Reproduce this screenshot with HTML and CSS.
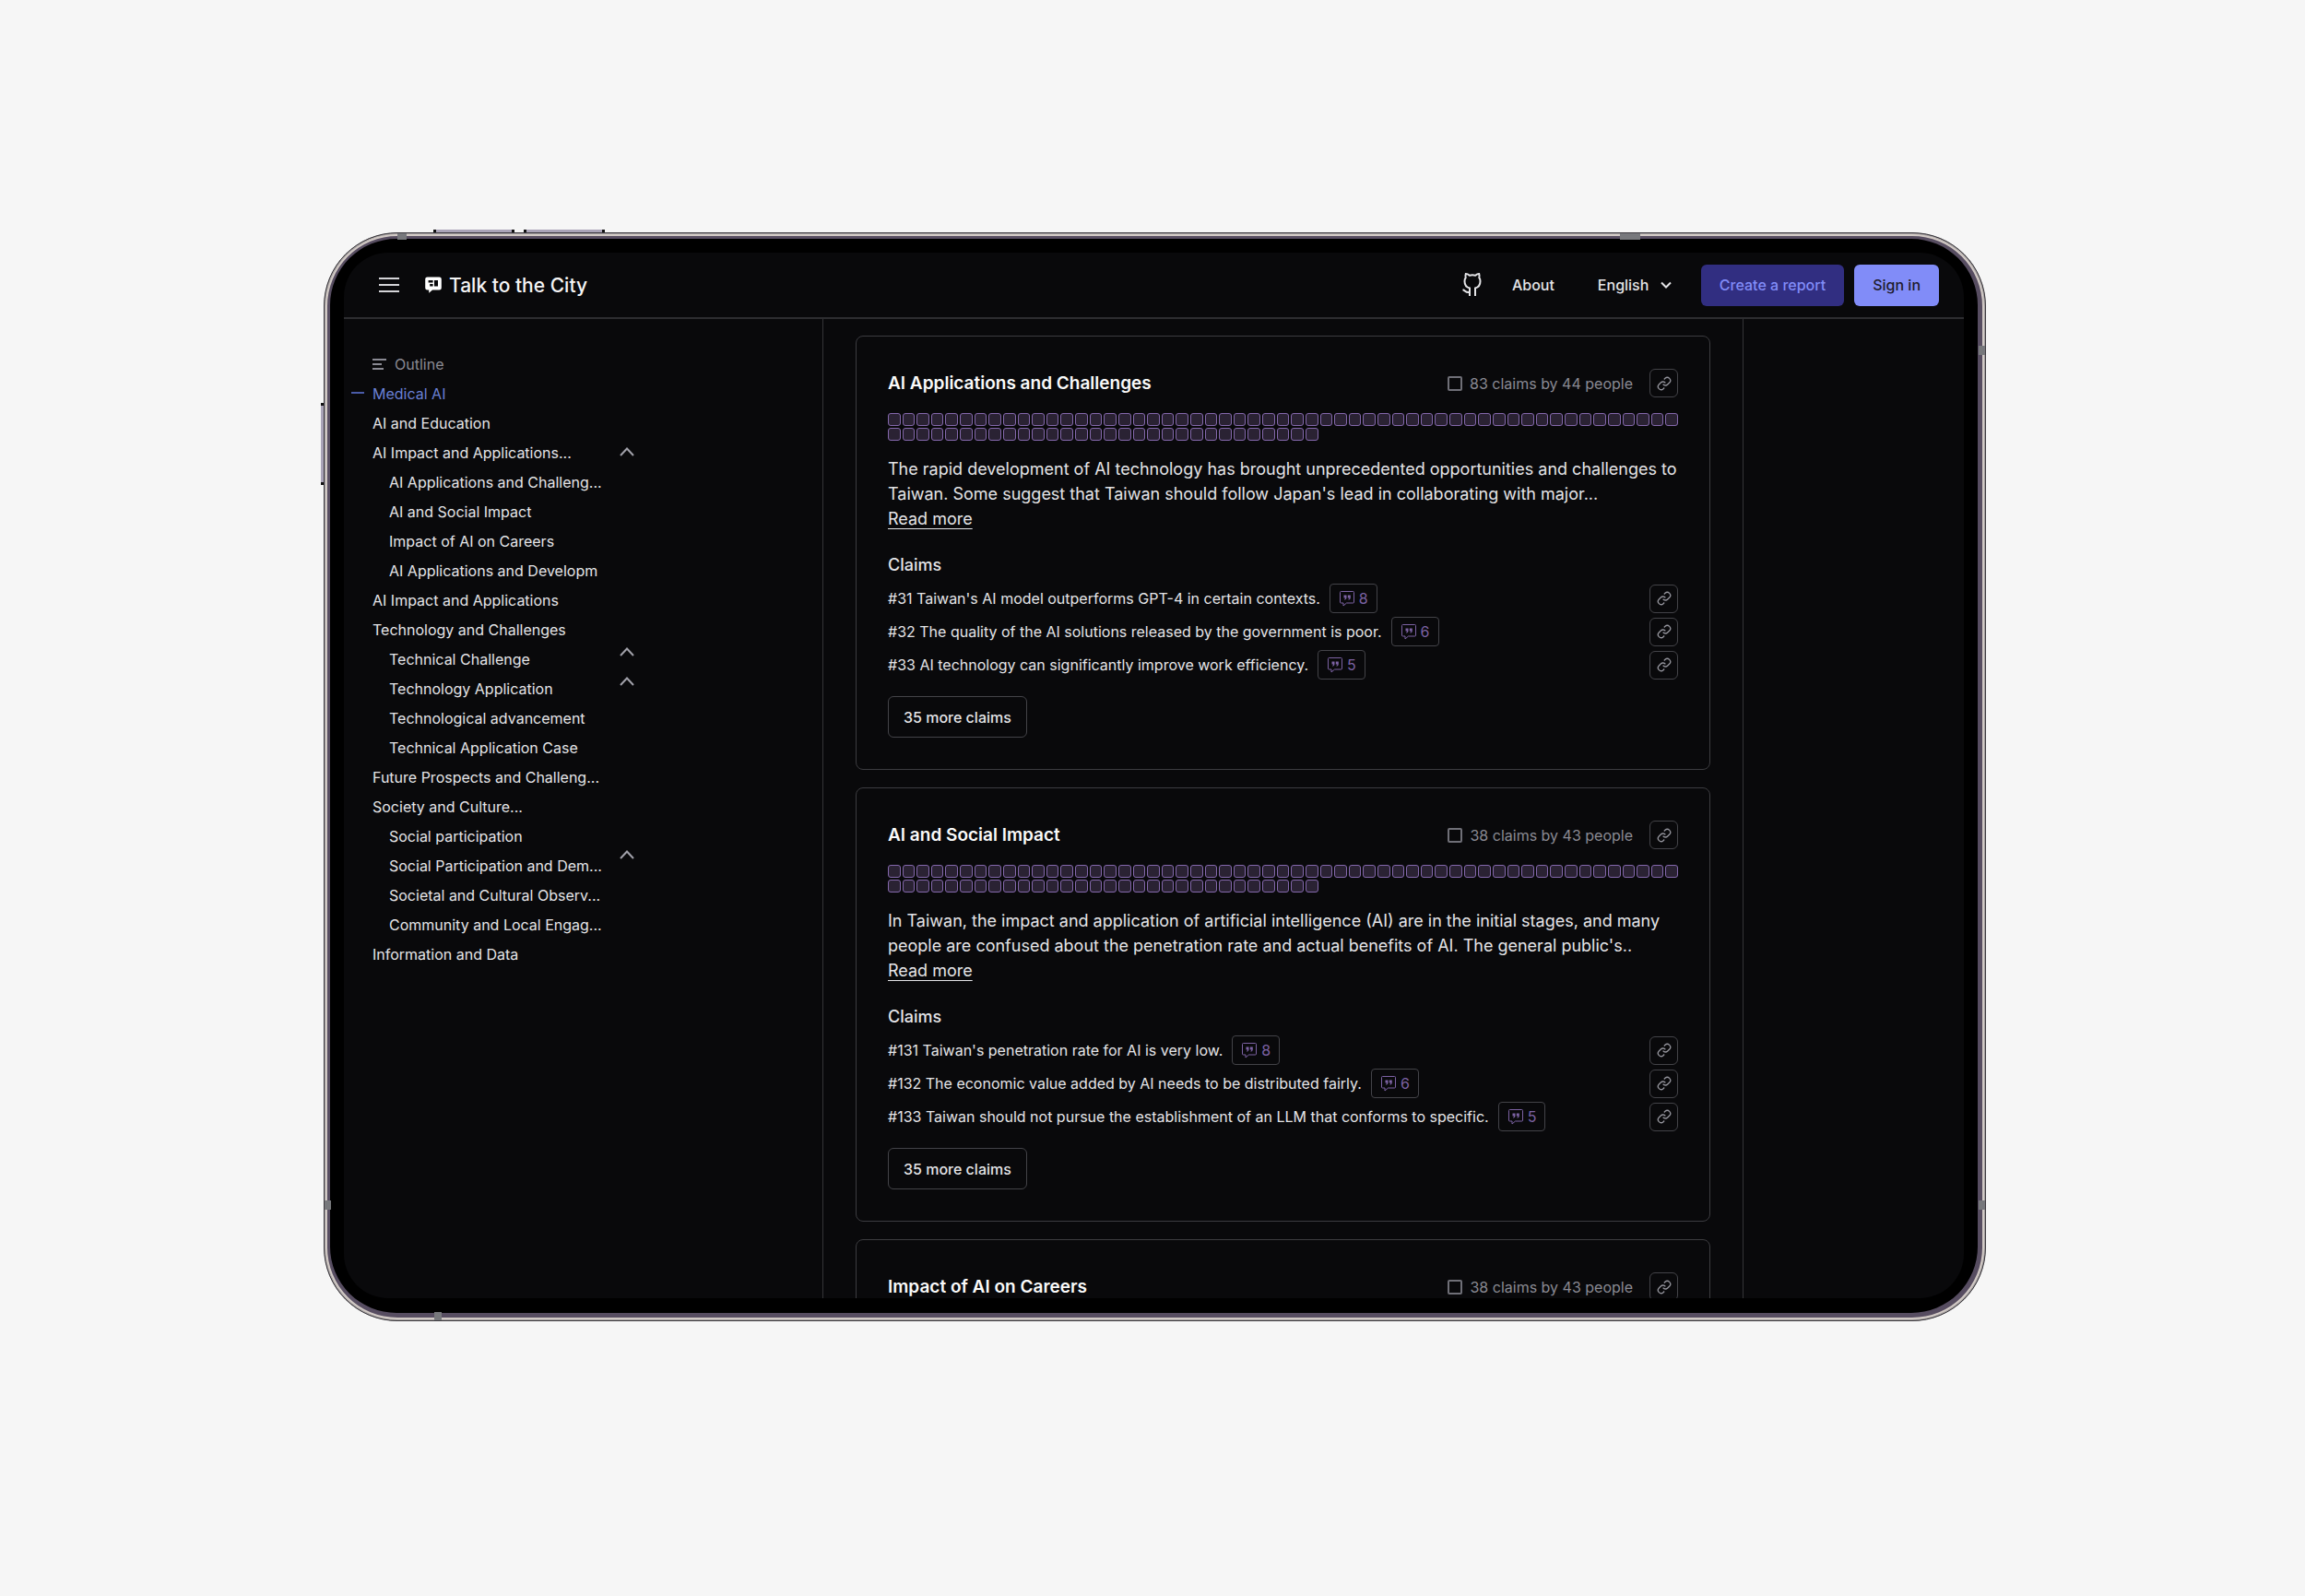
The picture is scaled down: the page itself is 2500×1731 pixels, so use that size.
FILE: index.html
```html
<!DOCTYPE html>
<html lang="en">
<head>
  <meta charset="UTF-8">
  <meta name="viewport" content="width=device-width, initial-scale=1.0">
  <title>Talk to the City</title>
  <link rel="stylesheet" href="styles.css">
</head>
<body>
  <!-- shared icons -->
  <svg class="sprite" aria-hidden="true">
    <symbol id="icon-link" viewBox="0 0 24 24">
      <path d="M10 13a5 5 0 0 0 7.54.54l3-3a5 5 0 0 0-7.07-7.07l-1.72 1.71"/>
      <path d="M14 11a5 5 0 0 0-7.54-.54l-3 3a5 5 0 0 0 7.07 7.07l1.71-1.71"/>
    </symbol>
    <symbol id="icon-quote" viewBox="0 0 18 18">
      <path d="M2.500 1.500h13a1 1 0 0 1 1 1v10.500a1 1 0 0 1-1 1H8.500L5 17V14H2.500a1 1 0 0 1-1-1V2.500a1 1 0 0 1 1-1z"/>
      <path fill="currentColor" stroke="none" d="M5.500 5.500h3v2.500c0 1.300-.7 2.200-2 2.700l-.4-.7c.7-.4 1-.9 1-1.500H5.500zM9.800 5.500h3v2.500c0 1.300-.7 2.200-2 2.700l-.4-.7c.7-.4 1-.9 1-1.500H9.800z"/>
    </symbol>
    <symbol id="icon-up" viewBox="0 0 16 10">
      <path d="M1 9l7-7.500L15 9"/>
    </symbol>
  </svg>

  <div class="device">
    <span class="key key-top key-power"></span>
    <span class="key key-top key-volume"></span>
    <span class="key key-side"></span>
    <span class="band band-top-left"></span>
    <span class="band band-top-right"></span>
    <span class="band band-bottom"></span>
    <span class="band band-left"></span>
    <span class="band band-right-top"></span>
    <span class="band band-right-bottom"></span>

    <div class="screen">
      <header class="navbar">
        <button class="menu-button" aria-label="Menu">
          <svg width="22" height="18" viewBox="0 0 22 18"><path d="M0 2h22M0 9h22M0 16h22"/></svg>
        </button>
        <a class="brand" href="#">
          <svg width="18" height="18" viewBox="0 0 18 18">
            <path fill="#fff" fill-rule="evenodd" d="M2.500 0.500h13a2.300 2.300 0 0 1 2.300 2.300v9.400a2.300 2.300 0 0 1-2.300 2.300H8L4.200 17.800V14.500H2.500a2.300 2.300 0 0 1-2.300-2.300V2.800A2.300 2.300 0 0 1 2.500 0.500zM3.600 4v2.600h5V4zM10 4v6.400h4V4zM5.200 8v2.400h3.400V8z"/>
          </svg>
          Talk to the City
        </a>
        <nav class="nav-links">
          <a class="github" href="#" aria-label="GitHub">
            <svg width="24" height="26" viewBox="0 0 24 26">
              <path d="M9 25v-8.500c-4-1-5.500-4-5.500-7.500 0-1.700.4-2.800 1.200-3.800-.5-1.500-.3-3 .1-4.200 1.700 0 3 .8 4 1.700 2.100-.5 4.300-.5 6.400 0 1-.9 2.300-1.700 4-1.700.4 1.200.6 2.700.1 4.200.8 1 1.200 2.100 1.200 3.800 0 3.500-1.500 6.500-5.500 7.500V25M9 20.800c-4.500 1.300-4.500-2-7.500-2.600"/>
            </svg>
          </a>
          <a href="#">About</a>
          <label class="language">
            <select aria-label="Language">
              <option>English</option>
            </select>
            <svg width="12" height="8" viewBox="0 0 12 8"><path d="M1 1.500l5 5 5-5"/></svg>
          </label>
        </nav>
        <button class="btn btn-create">Create a report</button>
        <button class="btn btn-signin">Sign in</button>
      </header>

      <div class="layout">
        <aside class="sidebar">
          <nav class="outline" aria-label="Outline">
            <div class="outline-title">
              <svg width="15" height="12" viewBox="0 0 15 12"><path d="M0 1h15M0 6h10M0 11h12"/></svg>
              Outline
            </div>
            <a class="active" href="#">Medical AI</a>
            <a href="#">AI and Education</a>
            <a href="#">AI Impact and Applications...</a>
            <a class="sub" href="#">AI Applications and Challeng...</a>
            <a class="sub" href="#">AI and Social Impact</a>
            <a class="sub" href="#">Impact of AI on Careers</a>
            <a class="sub" href="#">AI Applications and Developm</a>
            <a href="#">AI Impact and Applications</a>
            <a href="#">Technology and Challenges</a>
            <a class="sub" href="#">Technical Challenge</a>
            <a class="sub" href="#">Technology Application</a>
            <a class="sub" href="#">Technological advancement</a>
            <a class="sub" href="#">Technical Application Case</a>
            <a href="#">Future Prospects and Challeng...</a>
            <a href="#">Society and Culture...</a>
            <a class="sub" href="#">Social participation</a>
            <a class="sub" href="#">Social Participation and Dem...</a>
            <a class="sub" href="#">Societal and Cultural Observ...</a>
            <a class="sub" href="#">Community and Local Engag...</a>
            <a href="#">Information and Data</a>
          </nav>
          <div class="toggles">
            <button aria-label="Collapse AI Impact and Applications"><svg><use href="#icon-up"/></svg></button>
            <button class="technology" aria-label="Collapse Technology"><svg><use href="#icon-up"/></svg></button>
            <button aria-label="Collapse Future Prospects"><svg><use href="#icon-up"/></svg></button>
            <button class="society" aria-label="Collapse Society and Culture"><svg><use href="#icon-up"/></svg></button>
          </div>
        </aside>

        <main class="topics">
          <article class="card">
            <div class="card-header">
              <h2>AI Applications and Challenges</h2>
              <label class="count"><input type="checkbox"> 83 claims by 44 people</label>
              <button class="link-button" aria-label="Copy link"><svg><use href="#icon-link"/></svg></button>
            </div>
            <div class="cells" data-count="85"></div>
            <p class="summary">The rapid development of AI technology has brought unprecedented opportunities and challenges to Taiwan. Some suggest that Taiwan should follow Japan's lead in collaborating with major...</p>
            <a class="read-more" href="#">Read more</a>
            <h3>Claims</h3>
            <ul class="claims">
              <li>
                #31 Taiwan's AI model outperforms GPT-4 in certain contexts.
                <button class="quotes"><svg><use href="#icon-quote"/></svg>8</button>
                <button class="link-button" aria-label="Copy link"><svg><use href="#icon-link"/></svg></button>
              </li>
              <li>
                #32 The quality of the AI solutions released by the government is poor.
                <button class="quotes"><svg><use href="#icon-quote"/></svg>6</button>
                <button class="link-button" aria-label="Copy link"><svg><use href="#icon-link"/></svg></button>
              </li>
              <li>
                #33 AI technology can significantly improve work efficiency.
                <button class="quotes"><svg><use href="#icon-quote"/></svg>5</button>
                <button class="link-button" aria-label="Copy link"><svg><use href="#icon-link"/></svg></button>
              </li>
            </ul>
            <button class="more-claims">35 more claims</button>
          </article>

          <article class="card">
            <div class="card-header">
              <h2>AI and Social Impact</h2>
              <label class="count"><input type="checkbox"> 38 claims by 43 people</label>
              <button class="link-button" aria-label="Copy link"><svg><use href="#icon-link"/></svg></button>
            </div>
            <div class="cells" data-count="85"></div>
            <p class="summary">In Taiwan, the impact and application of artificial intelligence (AI) are in the initial stages, and many people are confused about the penetration rate and actual benefits of AI. The general public's..</p>
            <a class="read-more" href="#">Read more</a>
            <h3>Claims</h3>
            <ul class="claims">
              <li>
                #131 Taiwan's penetration rate for AI is very low.
                <button class="quotes"><svg><use href="#icon-quote"/></svg>8</button>
                <button class="link-button" aria-label="Copy link"><svg><use href="#icon-link"/></svg></button>
              </li>
              <li>
                #132 The economic value added by AI needs to be distributed fairly.
                <button class="quotes"><svg><use href="#icon-quote"/></svg>6</button>
                <button class="link-button" aria-label="Copy link"><svg><use href="#icon-link"/></svg></button>
              </li>
              <li>
                #133 Taiwan should not pursue the establishment of an LLM that conforms to specific.
                <button class="quotes"><svg><use href="#icon-quote"/></svg>5</button>
                <button class="link-button" aria-label="Copy link"><svg><use href="#icon-link"/></svg></button>
              </li>
            </ul>
            <button class="more-claims">35 more claims</button>
          </article>

          <article class="card">
            <div class="card-header">
              <h2>Impact of AI on Careers</h2>
              <label class="count"><input type="checkbox"> 38 claims by 43 people</label>
              <button class="link-button" aria-label="Copy link"><svg><use href="#icon-link"/></svg></button>
            </div>
          </article>
        </main>
      </div>
    </div>
  </div>

  <script>
    // fill each strip with its cells
    document.querySelectorAll('.cells').forEach(cells => {
      for (let i = 0; i < Number(cells.dataset.count); i++) {
        cells.appendChild(document.createElement('span'));
      }
    });
  </script>
</body>
</html>
```

FILE: styles.css
```css
* {
  box-sizing: border-box;
}

body {
  margin: 0;
  height: 100vh;
  padding: 252px 346px 298px 351px;
  background-color: #f6f6f6;
  font-family: Inter, "Liberation Sans", sans-serif;
  font-size: 16px;
  color: #e4e4e7;
}

a {
  color: inherit;
  text-decoration: none;
}

button {
  padding: 0;
  border: none;
  background: none;
  font: inherit;
  color: inherit;
  cursor: pointer;
}

svg {
  fill: none;
  stroke: currentColor;
  flex-shrink: 0;
}

.sprite {
  display: none;
}

/* tablet frame */
.device {
  position: relative;
  height: 100%;
  padding: 21px 23px 24px 21px;
  border: 1px solid #3d3a3f;
  border-radius: 80px;
  background-color: #000;
  box-shadow: inset 0 0 0 1px #a39fa0, inset 0 0 0 3px #d2cac5, inset -1px -1px 0 7px #574d61;
}

.key {
  position: absolute;
  background-color: #aaa4b8;
  border: 0 solid #111;
}

.key-top {
  top: -4px;
  width: 88px;
  height: 3px;
  border-width: 0 3px;
}

.key-power {
  left: 118px;
}

.key-volume {
  left: 216px;
}

.key-side {
  top: 184px;
  left: -4px;
  width: 3px;
  height: 89px;
  border-width: 3px 0;
}

.band {
  position: absolute;
  width: 7px;
  height: 10px;
  background-color: #77787c;
}

.band-top-left,
.band-top-right {
  top: 0;
  width: 10px;
  height: 7px;
}

.band-top-left {
  left: 79px;
}

.band-top-right {
  right: 374px;
  width: 22px;
}

.band-bottom {
  bottom: 0;
  left: 119px;
  width: 8px;
  height: 9px;
}

.band-left {
  left: 0;
  bottom: 120px;
}

.band-right-top {
  right: 0;
  top: 122px;
}

.band-right-bottom {
  right: 0;
  bottom: 120px;
}

.screen {
  display: flex;
  flex-direction: column;
  height: 100%;
  overflow: hidden;
  border-radius: 48px;
  background-color: #09090b;
}

/* top bar */
.navbar {
  display: flex;
  flex-shrink: 0;
  align-items: center;
  height: 72px;
  padding: 0 27px 0 38px;
  border-bottom: 2px solid #2d2d30;
  font-weight: 500;
}

.menu-button {
  display: flex;
  color: #d4d4d8;
}

.menu-button svg {
  stroke-width: 2;
}

.brand {
  display: flex;
  align-items: center;
  gap: 8px;
  margin-left: 28px;
  font-size: 21px;
  color: #f4f4f5;
}

.brand svg {
  stroke: none;
}

.nav-links {
  display: flex;
  align-items: center;
  margin-left: auto;
}

.github {
  display: flex;
  margin-right: 31px;
  stroke-width: 2;
}

.language {
  display: flex;
  align-items: center;
  gap: 12px;
  margin: 0 32px 0 47px;
}

.language select {
  appearance: none;
  padding: 0;
  border: none;
  background: none;
  font: inherit;
  color: inherit;
}

.language svg {
  stroke-width: 2;
}

.btn {
  height: 45px;
  padding: 0 20px;
  border-radius: 6px;
}

.btn-create {
  background-color: #312e81;
  color: #818cf8;
}

.btn-signin {
  margin-left: 11px;
  background-color: #818cf8;
  color: #1e1b2e;
}

/* page columns */
.layout {
  display: grid;
  grid-template-columns: 519px 1fr 239px;
  flex: 1;
  min-height: 0;
}

.sidebar {
  display: flex;
  justify-content: space-between;
  padding: 33px 204px 0 31px;
}

.outline a,
.outline-title {
  display: block;
  line-height: 32px;
}

.outline .outline-title {
  display: flex;
  align-items: center;
  gap: 9px;
  color: #8a8a93;
}

.outline-title svg {
  stroke-width: 2;
}

.outline .active {
  color: #6a80d4;
}

.outline .active::before {
  content: "";
  float: left;
  width: 14px;
  height: 2px;
  margin: 14px 0 0 -23px;
  background-color: #4a5ba8;
}

.outline .sub {
  padding-left: 18px;
}

.toggles {
  display: flex;
  flex-direction: column;
  padding-top: 95px;
}

.toggles button {
  display: flex;
  align-items: center;
  height: 32px;
  color: #a1a1aa;
}

.toggles svg {
  width: 16px;
  height: 10px;
  stroke-width: 2;
}

.toggles .technology {
  margin-top: 185px;
}

.toggles .society {
  margin-top: 156px;
}

/* topic cards */
.topics {
  display: flex;
  flex-direction: column;
  gap: 19px;
  padding: 18px 35px 0;
  border: solid #343437;
  border-width: 0 1px;
  overflow: hidden;
}

.card {
  flex-shrink: 0;
  padding: 35px 34px 34px;
  border: 1px solid #3c3c40;
  border-radius: 8px;
}

.card-header {
  display: flex;
  align-items: center;
}

.card h2 {
  margin: 0;
  font-size: 19px;
  font-weight: 600;
  line-height: 31px;
  color: #fafafa;
}

.count {
  display: flex;
  align-items: center;
  gap: 8px;
  margin: 0 18px 0 auto;
  color: #8a8a93;
}

.count input {
  appearance: none;
  width: 16px;
  height: 16px;
  margin: 0;
  border: 2px solid #6f6f77;
  border-radius: 2px;
}

.link-button {
  display: flex;
  align-items: center;
  justify-content: center;
  width: 31px;
  height: 31px;
  border: 1px solid #434348;
  border-radius: 6px;
  color: #94949c;
}

.link-button svg {
  width: 16px;
  height: 16px;
  stroke-width: 2;
}

.cells {
  display: grid;
  grid-template-columns: repeat(55, 1fr);
  gap: 2px;
  margin: 17px 0;
}

.cells span {
  height: 14px;
  border: 1px solid #8468ac;
  border-radius: 3px;
  background-color: #2a2233;
}

.summary {
  margin: 0;
  font-size: 18px;
  line-height: 27px;
}

.read-more {
  display: block;
  width: fit-content;
  font-size: 18px;
  line-height: 27px;
  text-decoration: underline;
  text-decoration-thickness: 1px;
  text-underline-offset: 4px;
}

.card h3 {
  margin: 23px 0 7px;
  font-size: 18px;
  font-weight: 500;
  line-height: 27px;
}

.claims {
  display: flex;
  flex-direction: column;
  gap: 4px;
  margin: 0;
  padding: 0;
  list-style: none;
}

.claims li {
  display: flex;
  align-items: center;
  gap: 10px;
}

.claims .link-button {
  margin-left: auto;
}

.quotes {
  display: flex;
  align-items: center;
  gap: 4px;
  height: 32px;
  padding: 0 9px;
  border: 1px solid #434348;
  border-radius: 4px;
  color: #7c62a3;
}

.quotes svg {
  width: 18px;
  height: 18px;
}

.more-claims {
  height: 45px;
  margin-top: 18px;
  padding: 0 16px;
  border: 1px solid #434348;
  border-radius: 6px;
  font-weight: 500;
}
```
